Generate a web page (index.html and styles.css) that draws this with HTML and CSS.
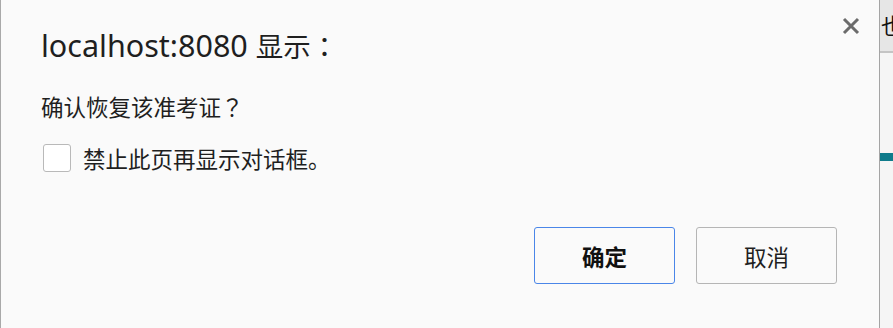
FILE: index.html
```html
<!DOCTYPE html>
<html lang="zh-CN">
<head>
<meta charset="utf-8">
<link rel="stylesheet" href="styles.css">
</head>
<body>
<div class="page">
  <div class="dialog">
    <div class="title-row">
      <div class="title">localhost:8080 <span class="title-cjk">显示<span class="punct" lang="zh-TW">：</span></span></div>
      <button class="close" aria-label="关闭">
        <svg width="18" height="18" viewBox="0 0 18 18"><path d="M2 2 L16 16 M16 2 L2 16" stroke="#6b6b6b" stroke-width="3" fill="none"/></svg>
      </button>
    </div>
    <div class="message">确认恢复该准考证<span class="punct" lang="zh-TW">？</span></div>
    <label class="check-row">
      <span class="checkbox"></span>
      <span class="check-label">禁止此页再显示对话框。</span>
    </label>
    <div class="buttons">
      <button class="btn btn-primary">确定</button>
      <button class="btn">取消</button>
    </div>
  </div>
  <div class="backdrop">
    <div class="backdrop-top"><span class="glyph">也</span></div>
    <div class="backdrop-body">
      <div class="teal-bar"></div>
    </div>
  </div>
</div>
</body>
</html>
```
FILE: styles.css
```css
html, body {
  margin: 0;
  padding: 0;
  width: 893px;
  height: 328px;
  overflow: hidden;
  background: #f4f4f4;
}
body {
  font-family: "Noto Sans", "Noto Sans CJK SC", sans-serif;
  color: #1f1f1f;
}
.page {
  display: flex;
  height: 328px;
}
.dialog {
  width: 880px;
  flex: none;
  background: #fafafa;
  border-left: 1px solid #a9a9a9;
  border-right: 1px solid #a4a4a4;
  box-shadow: 1px 0 2px rgba(0,0,0,0.25);
  box-sizing: border-box;
  padding-left: 40px;
}
.title-row {
  display: flex;
  justify-content: space-between;
  align-items: flex-start;
  padding-top: 24px;
  padding-right: 19px;
}
.title {
  font-size: 30.5px;
  line-height: 42px;
}
.title-cjk {
  font-family: "Noto Sans CJK SC", sans-serif;
  font-size: 27.5px;
}
.punct {
  font-family: "Noto Sans CJK TC", sans-serif;
}
.close {
  border: none;
  background: none;
  padding: 0;
  margin-top: -7px;
  width: 18px;
  height: 18px;
  display: flex;
}
.message {
  margin-top: 25px;
  font-family: "Noto Sans CJK SC", sans-serif;
  font-size: 22.5px;
  line-height: 30px;
}
.check-row {
  display: flex;
  align-items: center;
  margin-top: 22px;
  gap: 12px;
  margin-left: 2px;
}
.checkbox {
  width: 28px;
  height: 28px;
  box-sizing: border-box;
  border: 1px solid #b9b9b9;
  border-radius: 3px;
  background: #ffffff;
}
.check-label {
  font-family: "Noto Sans CJK SC", sans-serif;
  font-size: 22.5px;
  line-height: 30px;
}
.buttons {
  display: flex;
  justify-content: flex-end;
  gap: 21px;
  margin-top: 54px;
  padding-right: 42px;
}
.btn {
  width: 141px;
  height: 57px;
  box-sizing: border-box;
  border: 1px solid #b5b5b5;
  border-radius: 3px;
  background: #fafafa;
  font-family: "Noto Sans CJK SC", sans-serif;
  font-size: 22.5px;
  color: #1f1f1f;
  padding: 0;
}
.btn-primary {
  border-color: #4a86e8;
  font-weight: bold;
  color: #111;
}
.backdrop {
  flex: 1;
  overflow: hidden;
  display: flex;
  flex-direction: column;
}
.backdrop-top {
  height: 51px;
  background: #e6e6e6;
  border-bottom: 2px solid #c4c4c4;
  font-family: "Noto Sans CJK SC", sans-serif;
  font-size: 22px;
  line-height: 48px;
  white-space: nowrap;
  padding-left: 1px;
  color: #111;
}
.backdrop-body {
  flex: 1;
  background: #f5f5f5;
  padding-top: 100px;
}
.teal-bar {
  height: 8px;
  background: #0f7b8b;
}
```
